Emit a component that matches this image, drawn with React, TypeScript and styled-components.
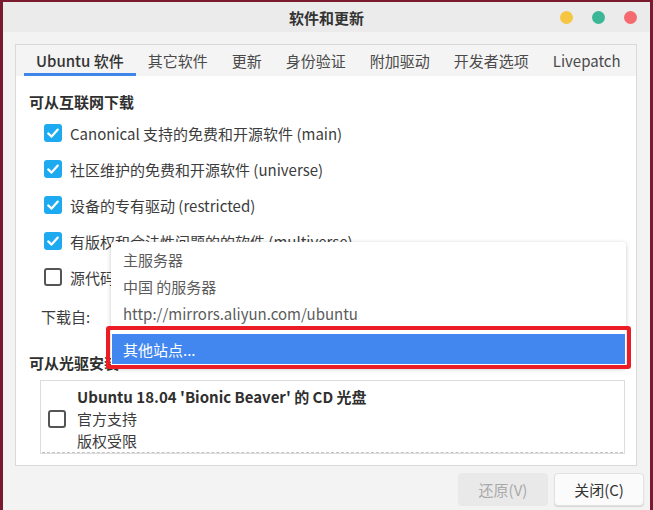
import React from "react";
import styled, { createGlobalStyle } from "styled-components";

const GlobalStyle = createGlobalStyle`
  html, body { margin: 0; padding: 0; }
  body {
    background: #7a1a2e;
    font-family: "Noto Sans CJK SC", "Noto Sans", sans-serif;
    overflow: hidden;
    width: 653px;
    height: 510px;
  }
`;

const Window = styled.div`
  position: relative;
  margin: 2px 0 0 3px;
  width: 647px;
  height: 508px;
  background: #f3f3f3;
  display: flex;
  flex-direction: column;
`;

const TitleBar = styled.div`
  height: 30px;
  background: #ebebeb;
  display: grid;
  grid-template-columns: 1fr auto 1fr;
  align-items: center;
`;

const Title = styled.div`
  grid-column: 2;
  font-size: 15px;
  font-weight: 700;
  color: #333;
`;

const Controls = styled.div`
  justify-self: end;
  display: flex;
  gap: 19px;
  padding-right: 13px;
`;

const Dot = styled.span<{ $c: string }>`
  width: 13px;
  height: 13px;
  border-radius: 50%;
  background: ${(p) => p.$c};
`;

const Body = styled.div`
  flex: 1;
  display: flex;
  flex-direction: column;
  padding: 12px 0 0 12px;
`;

const Notebook = styled.div`
  width: 620px;
  height: 420px;
  border: 1px solid #d9d9d9;
  display: flex;
  flex-direction: column;
`;

const TabBar = styled.div`
  height: 31px;
  display: flex;
  padding-left: 8px;
  background: #f4f4f4;
  overflow: hidden;
`;

const Tab = styled.div<{ $active?: boolean }>`
  flex: none;
  padding: 0 12px;
  display: flex;
  align-items: center;
  white-space: nowrap;
  font-size: 15px;
  font-weight: ${(p) => (p.$active ? 500 : 400)};
  color: ${(p) => (p.$active ? "#333" : "#4a4a4a")};
  box-shadow: ${(p) => (p.$active ? "inset 0 -3px 0 #3f86e8" : "none")};
`;

const Page = styled.div`
  flex: 1;
  background: #fff;
  padding: 14px 12px 0 13px;
  display: flex;
  flex-direction: column;
`;

const Heading = styled.div<{ $mt?: number }>`
  height: 24px;
  line-height: 24px;
  font-size: 15px;
  font-weight: 700;
  color: #2f2f2f;
  margin-top: ${(p) => p.$mt ?? 0}px;
`;

const List = styled.div`
  margin-top: 1px;
  padding-left: 15px;
  display: flex;
  flex-direction: column;
`;

const Row = styled.div`
  height: 36px;
  display: flex;
  align-items: center;
  gap: 8px;
  font-size: 15px;
  color: #3c3c3c;
  white-space: nowrap;
`;

const Box = styled.span<{ $checked?: boolean }>`
  flex: none;
  width: 18px;
  height: 18px;
  box-sizing: border-box;
  border-radius: 3px;
  display: flex;
  align-items: center;
  justify-content: center;
  background: ${(p) => (p.$checked ? "#1eaaf1" : "#fff")};
  border: ${(p) => (p.$checked ? "none" : "2px solid #555")};
`;

const SourceRow = styled.div`
  height: 36px;
  margin-top: 3px;
  padding-left: 12px;
  display: flex;
  align-items: center;
  font-size: 15px;
  color: #3c3c3c;
`;

const CdBox = styled.div`
  margin: 5px 0 0 11px;
  width: 585px;
  height: 74px;
  box-sizing: border-box;
  border: 1px solid #dcdcdc;
  display: flex;
  flex-direction: column;
`;

const CdRow = styled.div`
  flex: 1;
  display: flex;
  align-items: center;
  gap: 11px;
  padding: 5px 0 0 7px;
`;

const CdText = styled.div`
  display: flex;
  flex-direction: column;
  font-size: 15px;
  color: #3c3c3c;
  line-height: 22px;
`;

const CdTitle = styled.span`
  font-weight: 700;
  color: #2f2f2f;
`;

const Dashed = styled.div`
  margin: 0 1px 1px;
  border-top: 1px dashed #c4c4c4;
`;

const ButtonBar = styled.div`
  display: flex;
  justify-content: flex-end;
  gap: 6px;
  padding: 7px 6px 0 0;
`;

const Button = styled.div<{ $disabled?: boolean }>`
  width: 90px;
  height: 33px;
  box-sizing: border-box;
  border-radius: 4px;
  display: flex;
  align-items: center;
  justify-content: center;
  font-size: 15px;
  color: ${(p) => (p.$disabled ? "#a9a9a9" : "#333")};
  background: ${(p) => (p.$disabled ? "#e9e9e9" : "#fbfbfb")};
  border: 1px solid ${(p) => (p.$disabled ? "#e9e9e9" : "#e2e2e2")};
  box-shadow: ${(p) => (p.$disabled ? "none" : "0 1px 1px rgba(0,0,0,0.12)")};
`;

const Menu = styled.div`
  position: absolute;
  left: 108px;
  top: 240px;
  width: 515px;
  padding: 4px 0;
  background: #fff;
  border-radius: 3px;
  box-shadow: 0 1px 4px rgba(0, 0, 0, 0.22);
  display: flex;
  flex-direction: column;
`;

const MenuItem = styled.div<{ $hl?: boolean }>`
  height: ${(p) => (p.$hl ? 30 : 27)}px;
  margin: ${(p) => (p.$hl ? "7px 1px 0" : "0")};
  padding-left: ${(p) => (p.$hl ? 11 : 12)}px;
  display: flex;
  align-items: center;
  font-size: 15px;
  color: ${(p) => (p.$hl ? "#fff" : "#5c5c5c")};
  background: ${(p) => (p.$hl ? "#4287f0" : "transparent")};
`;

const RedFrame = styled.div`
  position: absolute;
  left: 103px;
  top: 324px;
  width: 525px;
  height: 43px;
  box-sizing: border-box;
  border: 4px solid #ec1c24;
  border-radius: 3px;
`;

const Check = () => (
  <svg width="14" height="14" viewBox="0 0 14 14">
    <path d="M2.2 7.4 L5.6 10.6 L11.8 3.6" fill="none" stroke="#fff" strokeWidth="2.2" strokeLinecap="round" strokeLinejoin="round" />
  </svg>
);

const sources = [
  { label: "Canonical 支持的免费和开源软件 (main)", checked: true },
  { label: "社区维护的免费和开源软件 (universe)", checked: true },
  { label: "设备的专有驱动 (restricted)", checked: true },
  { label: "有版权和合法性问题的的软件 (multiverse)", checked: true },
  { label: "源代码", checked: false },
];

const tabs = ["Ubuntu 软件", "其它软件", "更新", "身份验证", "附加驱动", "开发者选项", "Livepatch"];

export default function App() {
  return (
    <>
      <GlobalStyle />
      <Window>
        <TitleBar>
          <Title>软件和更新</Title>
          <Controls>
            <Dot $c="#f6c643" />
            <Dot $c="#3bb797" />
            <Dot $c="#f46a6e" />
          </Controls>
        </TitleBar>
        <Body>
          <Notebook>
            <TabBar>
              {tabs.map((t, i) => (
                <Tab key={t} $active={i === 0}>
                  {t}
                </Tab>
              ))}
            </TabBar>
            <Page>
              <Heading>可从互联网下载</Heading>
              <List>
                {sources.map((s) => (
                  <Row key={s.label}>
                    <Box $checked={s.checked}>{s.checked && <Check />}</Box>
                    {s.label}
                  </Row>
                ))}
              </List>
              <SourceRow>下载自:</SourceRow>
              <Heading $mt={17}>可从光驱安装</Heading>
              <CdBox>
                <CdRow>
                  <Box />
                  <CdText>
                    <CdTitle>Ubuntu 18.04 'Bionic Beaver' 的 CD 光盘</CdTitle>
                    <span>官方支持</span>
                    <span>版权受限</span>
                  </CdText>
                </CdRow>
                <Dashed />
              </CdBox>
            </Page>
          </Notebook>
          <ButtonBar>
            <Button $disabled>还原(V)</Button>
            <Button>关闭(C)</Button>
          </ButtonBar>
        </Body>
        <Menu>
          <MenuItem>主服务器</MenuItem>
          <MenuItem>中国 的服务器</MenuItem>
          <MenuItem>http://mirrors.aliyun.com/ubuntu</MenuItem>
          <MenuItem $hl>其他站点...</MenuItem>
        </Menu>
        <RedFrame />
      </Window>
    </>
  );
}
